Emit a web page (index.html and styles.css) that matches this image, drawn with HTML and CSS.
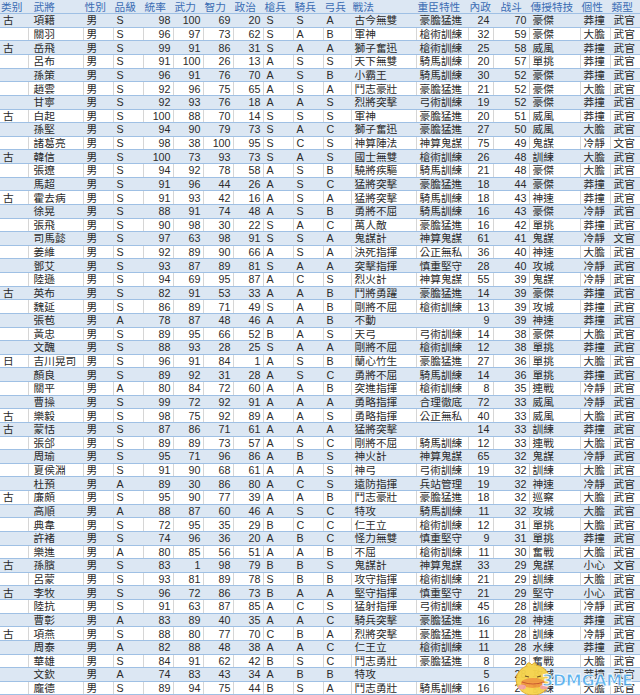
FILE: index.html
```html
<!DOCTYPE html>
<html>
<head>
<meta charset="utf-8">
<link rel="stylesheet" href="styles.css">
</head>
<body>
<div class="sheet">
<table class="grid">
<colgroup>
<col class="w28"><col class="w55"><col class="w30"><col class="w30"><col class="w30"><col class="w30"><col class="w30"><col class="w30"><col class="w30"><col class="w30"><col class="w28"><col class="w65"><col class="w52"><col class="w25"><col class="w36"><col class="w51"><col class="w30"><col class="w30">
</colgroup>
<thead>
<tr><th>类别</th><th>武將</th><th>性別</th><th>品級</th><th>統率</th><th>武力</th><th>智力</th><th>政治</th><th>槍兵</th><th>騎兵</th><th>弓兵</th><th>戰法</th><th>重臣特性</th><th>內政</th><th>战斗</th><th>傳授特技</th><th>個性</th><th>類型</th></tr>
</thead>
<tbody>
<tr><td>古</td><td>項籍</td><td>男</td><td>S</td><td>98</td><td>100</td><td>69</td><td>20</td><td>S</td><td>S</td><td>A</td><td>古今無雙</td><td>豪膽猛進</td><td>24</td><td>70</td><td>豪傑</td><td>莽撞</td><td>武官</td></tr>
<tr><td></td><td>關羽</td><td>男</td><td>S</td><td>96</td><td>97</td><td>73</td><td>62</td><td>S</td><td>A</td><td>B</td><td>軍神</td><td>槍術訓練</td><td>32</td><td>59</td><td>豪傑</td><td>大膽</td><td>武官</td></tr>
<tr><td>古</td><td>岳飛</td><td>男</td><td>S</td><td>99</td><td>91</td><td>86</td><td>31</td><td>S</td><td>A</td><td>A</td><td>獅子奮迅</td><td>槍術訓練</td><td>25</td><td>58</td><td>威風</td><td>莽撞</td><td>武官</td></tr>
<tr><td></td><td>呂布</td><td>男</td><td>S</td><td>91</td><td>100</td><td>26</td><td>13</td><td>A</td><td>S</td><td>S</td><td>天下無雙</td><td>騎馬訓練</td><td>20</td><td>57</td><td>單挑</td><td>莽撞</td><td>武官</td></tr>
<tr><td></td><td>孫策</td><td>男</td><td>S</td><td>96</td><td>91</td><td>76</td><td>70</td><td>A</td><td>S</td><td>B</td><td>小霸王</td><td>騎馬訓練</td><td>30</td><td>52</td><td>豪傑</td><td>莽撞</td><td>武官</td></tr>
<tr><td></td><td>趙雲</td><td>男</td><td>S</td><td>92</td><td>96</td><td>75</td><td>65</td><td>A</td><td>S</td><td>A</td><td>鬥志豪壯</td><td>豪膽猛進</td><td>21</td><td>52</td><td>豪傑</td><td>大膽</td><td>武官</td></tr>
<tr><td></td><td>甘寧</td><td>男</td><td>S</td><td>92</td><td>93</td><td>76</td><td>18</td><td>A</td><td>A</td><td>S</td><td>烈將突擊</td><td>弓術訓練</td><td>19</td><td>52</td><td>豪傑</td><td>莽撞</td><td>武官</td></tr>
<tr><td>古</td><td>白起</td><td>男</td><td>S</td><td>100</td><td>88</td><td>70</td><td>14</td><td>S</td><td>S</td><td>S</td><td>軍神</td><td>豪膽猛進</td><td>20</td><td>51</td><td>威風</td><td>莽撞</td><td>武官</td></tr>
<tr><td></td><td>孫堅</td><td>男</td><td>S</td><td>94</td><td>90</td><td>79</td><td>73</td><td>S</td><td>A</td><td>C</td><td>獅子奮迅</td><td>豪膽猛進</td><td>27</td><td>50</td><td>威風</td><td>大膽</td><td>武官</td></tr>
<tr><td></td><td>諸葛亮</td><td>男</td><td>S</td><td>98</td><td>38</td><td>100</td><td>95</td><td>S</td><td>C</td><td>S</td><td>神算陣法</td><td>神算鬼謀</td><td>75</td><td>49</td><td>鬼謀</td><td>冷靜</td><td>文官</td></tr>
<tr><td>古</td><td>韓信</td><td>男</td><td>S</td><td>100</td><td>73</td><td>93</td><td>73</td><td>S</td><td>A</td><td>S</td><td>國士無雙</td><td>槍術訓練</td><td>26</td><td>48</td><td>訓練</td><td>大膽</td><td>武官</td></tr>
<tr><td></td><td>張遼</td><td>男</td><td>S</td><td>94</td><td>92</td><td>78</td><td>58</td><td>A</td><td>S</td><td>B</td><td>驍將疾驅</td><td>騎馬訓練</td><td>21</td><td>48</td><td>豪傑</td><td>大膽</td><td>武官</td></tr>
<tr><td></td><td>馬超</td><td>男</td><td>S</td><td>91</td><td>96</td><td>44</td><td>26</td><td>A</td><td>S</td><td>C</td><td>猛將突擊</td><td>豪膽猛進</td><td>18</td><td>44</td><td>豪傑</td><td>莽撞</td><td>武官</td></tr>
<tr><td>古</td><td>霍去病</td><td>男</td><td>S</td><td>91</td><td>93</td><td>42</td><td>16</td><td>A</td><td>S</td><td>A</td><td>猛將突擊</td><td>騎馬訓練</td><td>18</td><td>43</td><td>神速</td><td>莽撞</td><td>武官</td></tr>
<tr><td></td><td>徐晃</td><td>男</td><td>S</td><td>88</td><td>91</td><td>74</td><td>48</td><td>A</td><td>S</td><td>B</td><td>勇將不屈</td><td>騎馬訓練</td><td>16</td><td>43</td><td>豪傑</td><td>冷靜</td><td>武官</td></tr>
<tr><td></td><td>張飛</td><td>男</td><td>S</td><td>90</td><td>98</td><td>30</td><td>22</td><td>S</td><td>A</td><td>C</td><td>萬人敵</td><td>豪膽猛進</td><td>16</td><td>42</td><td>單挑</td><td>莽撞</td><td>武官</td></tr>
<tr><td></td><td>司馬懿</td><td>男</td><td>S</td><td>97</td><td>63</td><td>98</td><td>91</td><td>S</td><td>S</td><td>A</td><td>鬼謀計</td><td>神算鬼謀</td><td>61</td><td>41</td><td>鬼謀</td><td>冷靜</td><td>文官</td></tr>
<tr><td></td><td>姜維</td><td>男</td><td>S</td><td>92</td><td>89</td><td>90</td><td>66</td><td>A</td><td>S</td><td>A</td><td>決死指揮</td><td>公正無私</td><td>36</td><td>40</td><td>神速</td><td>大膽</td><td>武官</td></tr>
<tr><td></td><td>鄧艾</td><td>男</td><td>S</td><td>93</td><td>87</td><td>89</td><td>81</td><td>S</td><td>A</td><td>A</td><td>突擊指揮</td><td>慎重堅守</td><td>28</td><td>40</td><td>攻城</td><td>冷靜</td><td>武官</td></tr>
<tr><td></td><td>陸遜</td><td>男</td><td>S</td><td>94</td><td>69</td><td>95</td><td>87</td><td>A</td><td>C</td><td>S</td><td>烈火計</td><td>神算鬼謀</td><td>55</td><td>39</td><td>鬼謀</td><td>冷靜</td><td>武官</td></tr>
<tr><td>古</td><td>英布</td><td>男</td><td>S</td><td>82</td><td>91</td><td>53</td><td>33</td><td>A</td><td>A</td><td>B</td><td>鬥將勇躍</td><td>豪膽猛進</td><td>14</td><td>39</td><td>豪傑</td><td>莽撞</td><td>武官</td></tr>
<tr><td></td><td>魏延</td><td>男</td><td>S</td><td>86</td><td>89</td><td>71</td><td>49</td><td>S</td><td>A</td><td>B</td><td>剛將不屈</td><td>槍術訓練</td><td>13</td><td>39</td><td>攻城</td><td>莽撞</td><td>武官</td></tr>
<tr><td></td><td>張苞</td><td>男</td><td>A</td><td>78</td><td>87</td><td>48</td><td>46</td><td>A</td><td>A</td><td>B</td><td>不動</td><td></td><td>9</td><td>39</td><td>神速</td><td>莽撞</td><td>武官</td></tr>
<tr><td></td><td>黃忠</td><td>男</td><td>S</td><td>89</td><td>95</td><td>66</td><td>52</td><td>B</td><td>A</td><td>S</td><td>天弓</td><td>弓術訓練</td><td>14</td><td>38</td><td>豪傑</td><td>大膽</td><td>武官</td></tr>
<tr><td></td><td>文醜</td><td>男</td><td>S</td><td>88</td><td>93</td><td>28</td><td>25</td><td>S</td><td>A</td><td>A</td><td>剛將不屈</td><td>槍術訓練</td><td>12</td><td>38</td><td>單挑</td><td>莽撞</td><td>武官</td></tr>
<tr><td>日</td><td>吉川晃司</td><td>男</td><td>S</td><td>96</td><td>91</td><td>84</td><td>1</td><td>A</td><td>S</td><td>B</td><td>蘭心竹生</td><td>豪膽猛進</td><td>27</td><td>36</td><td>單挑</td><td>大膽</td><td>武官</td></tr>
<tr><td></td><td>顏良</td><td>男</td><td>S</td><td>89</td><td>92</td><td>31</td><td>28</td><td>A</td><td>S</td><td>C</td><td>勇將不屈</td><td>騎馬訓練</td><td>14</td><td>36</td><td>單挑</td><td>莽撞</td><td>武官</td></tr>
<tr><td></td><td>關平</td><td>男</td><td>A</td><td>80</td><td>84</td><td>72</td><td>60</td><td>A</td><td>A</td><td>B</td><td>突進指揮</td><td>槍術訓練</td><td>8</td><td>35</td><td>連戰</td><td>冷靜</td><td>武官</td></tr>
<tr><td></td><td>曹操</td><td>男</td><td>S</td><td>99</td><td>72</td><td>92</td><td>91</td><td>A</td><td>A</td><td>A</td><td>勇略指揮</td><td>合理徹底</td><td>72</td><td>33</td><td>威風</td><td>冷靜</td><td>武官</td></tr>
<tr><td>古</td><td>樂毅</td><td>男</td><td>S</td><td>98</td><td>75</td><td>92</td><td>89</td><td>A</td><td>A</td><td>S</td><td>勇略指揮</td><td>公正無私</td><td>40</td><td>33</td><td>威風</td><td>大膽</td><td>武官</td></tr>
<tr><td>古</td><td>蒙恬</td><td>男</td><td>S</td><td>87</td><td>86</td><td>71</td><td>61</td><td>A</td><td>A</td><td>A</td><td>猛將突擊</td><td></td><td>14</td><td>33</td><td>訓練</td><td>莽撞</td><td>武官</td></tr>
<tr><td></td><td>張郃</td><td>男</td><td>S</td><td>89</td><td>89</td><td>73</td><td>57</td><td>A</td><td>S</td><td>C</td><td>剛將不屈</td><td>騎馬訓練</td><td>12</td><td>33</td><td>連戰</td><td>大膽</td><td>武官</td></tr>
<tr><td></td><td>周瑜</td><td>男</td><td>S</td><td>95</td><td>71</td><td>96</td><td>86</td><td>A</td><td>B</td><td>S</td><td>神火計</td><td>神算鬼謀</td><td>65</td><td>32</td><td>鬼謀</td><td>冷靜</td><td>武官</td></tr>
<tr><td></td><td>夏侯淵</td><td>男</td><td>S</td><td>91</td><td>90</td><td>68</td><td>61</td><td>A</td><td>A</td><td>S</td><td>神弓</td><td>弓術訓練</td><td>19</td><td>32</td><td>訓練</td><td>大膽</td><td>武官</td></tr>
<tr><td></td><td>杜預</td><td>男</td><td>A</td><td>89</td><td>30</td><td>86</td><td>80</td><td>A</td><td>C</td><td>S</td><td>遠防指揮</td><td>兵站管理</td><td>19</td><td>32</td><td>神速</td><td>冷靜</td><td>武官</td></tr>
<tr><td>古</td><td>廉頗</td><td>男</td><td>S</td><td>95</td><td>90</td><td>77</td><td>39</td><td>A</td><td>A</td><td>B</td><td>鬥志豪壯</td><td>豪膽猛進</td><td>18</td><td>32</td><td>巡察</td><td>大膽</td><td>武官</td></tr>
<tr><td></td><td>高順</td><td>男</td><td>A</td><td>88</td><td>87</td><td>60</td><td>46</td><td>A</td><td>S</td><td>C</td><td>特攻</td><td>騎馬訓練</td><td>11</td><td>32</td><td>攻城</td><td>大膽</td><td>武官</td></tr>
<tr><td></td><td>典韋</td><td>男</td><td>S</td><td>72</td><td>95</td><td>35</td><td>29</td><td>B</td><td>C</td><td>C</td><td>仁王立</td><td>槍術訓練</td><td>12</td><td>31</td><td>單挑</td><td>大膽</td><td>武官</td></tr>
<tr><td></td><td>許褚</td><td>男</td><td>S</td><td>74</td><td>96</td><td>36</td><td>20</td><td>A</td><td>B</td><td>C</td><td>怪力無雙</td><td>慎重堅守</td><td>9</td><td>31</td><td>單挑</td><td>莽撞</td><td>武官</td></tr>
<tr><td></td><td>樂進</td><td>男</td><td>A</td><td>80</td><td>85</td><td>56</td><td>51</td><td>A</td><td>A</td><td>B</td><td>不屈</td><td>槍術訓練</td><td>11</td><td>30</td><td>奮戰</td><td>大膽</td><td>武官</td></tr>
<tr><td>古</td><td>孫臏</td><td>男</td><td>S</td><td>83</td><td>1</td><td>98</td><td>79</td><td>B</td><td>B</td><td>S</td><td>鬼謀計</td><td>神算鬼謀</td><td>33</td><td>29</td><td>鬼謀</td><td>小心</td><td>文官</td></tr>
<tr><td></td><td>呂蒙</td><td>男</td><td>S</td><td>93</td><td>81</td><td>89</td><td>78</td><td>S</td><td>B</td><td>B</td><td>攻守指揮</td><td>槍術訓練</td><td>21</td><td>29</td><td>訓練</td><td>大膽</td><td>武官</td></tr>
<tr><td>古</td><td>李牧</td><td>男</td><td>S</td><td>96</td><td>72</td><td>86</td><td>73</td><td>B</td><td>A</td><td>A</td><td>堅守指揮</td><td>慎重堅守</td><td>21</td><td>29</td><td>堅守</td><td>小心</td><td>武官</td></tr>
<tr><td></td><td>陸抗</td><td>男</td><td>S</td><td>91</td><td>63</td><td>87</td><td>85</td><td>A</td><td>C</td><td>S</td><td>猛射指揮</td><td>弓術訓練</td><td>45</td><td>28</td><td>訓練</td><td>冷靜</td><td>武官</td></tr>
<tr><td></td><td>曹彰</td><td>男</td><td>A</td><td>83</td><td>89</td><td>40</td><td>35</td><td>A</td><td>A</td><td>C</td><td>騎兵突擊</td><td>豪膽猛進</td><td>16</td><td>28</td><td>神速</td><td>莽撞</td><td>武官</td></tr>
<tr><td>古</td><td>項燕</td><td>男</td><td>S</td><td>88</td><td>80</td><td>77</td><td>70</td><td>C</td><td>B</td><td>A</td><td>烈將突擊</td><td>豪膽猛進</td><td>11</td><td>28</td><td>訓練</td><td>冷靜</td><td>武官</td></tr>
<tr><td></td><td>周泰</td><td>男</td><td>A</td><td>82</td><td>88</td><td>48</td><td>38</td><td>A</td><td>A</td><td>C</td><td>仁王立</td><td>槍術訓練</td><td>11</td><td>28</td><td>水練</td><td>莽撞</td><td>武官</td></tr>
<tr><td></td><td>華雄</td><td>男</td><td>S</td><td>84</td><td>91</td><td>62</td><td>42</td><td>B</td><td>S</td><td>C</td><td>鬥志勇壯</td><td>豪膽猛進</td><td>8</td><td>28</td><td>奮戰</td><td>大膽</td><td>武官</td></tr>
<tr><td></td><td>文欽</td><td>男</td><td>A</td><td>74</td><td>83</td><td>43</td><td>34</td><td>A</td><td>B</td><td>B</td><td>特攻</td><td></td><td>5</td><td>28</td><td>攻城</td><td>莽撞</td><td>武官</td></tr>
<tr><td></td><td>龐德</td><td>男</td><td>S</td><td>89</td><td>94</td><td>75</td><td>44</td><td>B</td><td>S</td><td>A</td><td>鬥志勇壯</td><td>騎馬訓練</td><td>16</td><td>27</td><td>訓練</td><td>大膽</td><td>武官</td></tr>
</tbody>
</table>
<div class="watermark">
<svg class="chick" width="40" height="36" viewBox="0 0 40 36">
<ellipse cx="20" cy="20" rx="17" ry="15" fill="#f7d44a" stroke="#e0a92a" stroke-width="1"/>
<path d="M13 6 Q15 0 19 5 Q22 0 24 6" fill="#f7d44a" stroke="#e0a92a" stroke-width="1"/>
<ellipse cx="20" cy="23" rx="12" ry="5" fill="#f29a3a"/>
<path d="M9 22 Q20 26 31 22" stroke="#c8562a" stroke-width="1.2" fill="none"/>
<ellipse cx="9" cy="27" rx="4" ry="2.5" fill="#f5a3a0"/>
<ellipse cx="31" cy="27" rx="4" ry="2.5" fill="#f5a3a0"/>
<path d="M12 16 l4 1" stroke="#6b4a1a" stroke-width="1.2"/>
<path d="M28 16 l-4 1" stroke="#6b4a1a" stroke-width="1.2"/>
</svg>
<span class="wm-text">3DMGAME</span>
</div>
</div>
</body>
</html>
```
FILE: styles.css
```css
html, body {
  margin: 0;
  padding: 0;
  background: #ffffff;
}
.sheet {
  position: relative;
  width: 640px;
  height: 695px;
  overflow: hidden;
}
.grid {
  border-collapse: collapse;
  table-layout: fixed;
  width: 640px;
  font-family: "Liberation Sans", "Noto Sans CJK TC", sans-serif;
  font-size: 10.7px;
  color: #2b2b2b;
}
.w25 { width: 25px; }
.w28 { width: 28px; }
.w30 { width: 30px; }
.w36 { width: 36px; }
.w51 { width: 51px; }
.w52 { width: 52px; }
.w55 { width: 55px; }
.w65 { width: 65px; }
.grid tr {
  height: 13.63px;
}
.grid th, .grid td {
  padding: 0 2px 0 3px;
  line-height: 12px;
  white-space: nowrap;
  overflow: hidden;
  text-align: left;
  font-weight: normal;
  border-bottom: 1px solid #9fc0e4;
  border-right: 1px solid #d6d6d6;
}
.grid th {
  color: #3b6db3;
  background: #dce7f3;
  padding-left: 1px;
  border-right-color: #dce7f3;
}
.grid tbody tr:nth-child(odd) td {
  background: #dce7f3;
  border-right-color: #dce7f3;
}
.grid th:nth-child(2), .grid td:nth-child(2) {
  padding-left: 5px;
}
.grid th:nth-child(15) {
  padding-left: 7px;
}
.grid td:nth-child(5), .grid td:nth-child(6), .grid td:nth-child(7),
.grid td:nth-child(8), .grid td:nth-child(14), .grid td:nth-child(15) {
  text-align: right;
  padding-right: 2px;
}
.grid td:nth-child(14) {
  padding-right: 3px;
}
.watermark {
  position: absolute;
  left: 513px;
  top: 660px;
  width: 127px;
  height: 35px;
}
.chick {
  position: absolute;
  left: 0;
  top: 0;
  opacity: 0.95;
}
.wm-text {
  position: absolute;
  left: 29px;
  top: 12px;
  font-family: "DejaVu Sans", sans-serif;
  font-weight: bold;
  font-size: 16px;
  line-height: 18px;
  letter-spacing: -0.3px;
  color: rgba(75, 170, 238, 0.85);
  -webkit-text-stroke: 0.8px rgba(255, 255, 255, 0.95);
}
```
